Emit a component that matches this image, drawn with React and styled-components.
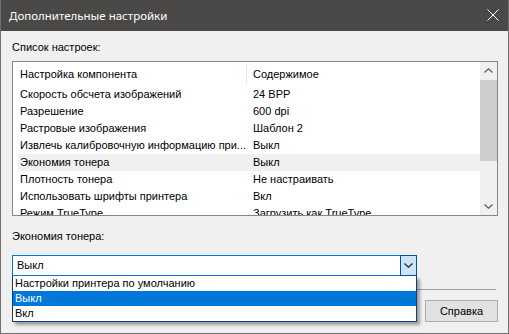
import styled, { createGlobalStyle } from 'styled-components';

const GlobalStyle = createGlobalStyle`
    html, body {
        margin: 0;
        padding: 0;
        background: #ffffff;
    }
    body {
        font-family: "Liberation Sans", Arial, sans-serif;
        font-size: 11px;
        color: #000000;
    }
`;

const rows = [
    ['Скорость обсчета изображений', '24 BPP'],
    ['Разрешение', '600 dpi'],
    ['Растровые изображения', 'Шаблон 2'],
    ['Извлечь калибровочную информацию при...', 'Выкл'],
    ['Экономия тонера', 'Выкл', true],
    ['Плотность тонера', 'Не настраивать'],
    ['Использовать шрифты принтера', 'Вкл'],
    ['Режим TrueType', 'Загрузить как TrueType'],
];

const options = ['Настройки принтера по умолчанию', 'Выкл', 'Вкл'];

function Chevron({ up, color = '#606060', w = 9, h = 5 }) {
    return (
        <svg width={w} height={h} viewBox="0 0 9 5">
            <path
                d={up ? 'M0.5 4.5 L4.5 0.8 L8.5 4.5' : 'M0.5 0.5 L4.5 4.2 L8.5 0.5'}
                fill="none"
                stroke={color}
                strokeWidth="1.3"
            />
        </svg>
    );
}

function App() {
    return (
        <>
            <GlobalStyle />
            <Window>
                <TitleBar>
                    <Title>Дополнительные настройки</Title>
                    <Close>
                        <svg width="12" height="12" viewBox="0 0 12 12">
                            <path d="M0.5 0.5 L11.5 11.5 M11.5 0.5 L0.5 11.5" stroke="#ffffff" strokeWidth="1" />
                        </svg>
                    </Close>
                </TitleBar>
                <Body>
                    <Label $top={8}>Список настроек:</Label>
                    <ListBox>
                        <ListContent>
                            <HeaderRow>
                                <HeaderCell $w={233}>Настройка компонента</HeaderCell>
                                <HeaderCell $sep>Содержимое</HeaderCell>
                            </HeaderRow>
                            {rows.map(([name, value, selected]) => (
                                <Row key={name} $selected={selected}>
                                    <NameCell>{name}</NameCell>
                                    <ValueCell>{value}</ValueCell>
                                </Row>
                            ))}
                        </ListContent>
                        <ScrollBar>
                            <ArrowBox><Chevron up /></ArrowBox>
                            <Thumb />
                            <Track />
                            <ArrowBox><Chevron /></ArrowBox>
                        </ScrollBar>
                    </ListBox>
                    <Label $top={12}>Экономия тонера:</Label>
                    <ComboWrap>
                        <Combo>
                            <ComboText>Выкл</ComboText>
                            <ComboButton>
                                <Chevron color="#2b2b2b" />
                            </ComboButton>
                        </Combo>
                        <DropList>
                            {options.map((o) => (
                                <Option key={o} $selected={o === 'Выкл'}>{o}</Option>
                            ))}
                        </DropList>
                    </ComboWrap>
                    <Separator />
                    <ButtonRow>
                        <Button>Справка</Button>
                    </ButtonRow>
                </Body>
            </Window>
        </>
    );
}

const Window = styled.div`
    width: 509px;
    height: 334px;
    box-sizing: border-box;
    border: 1px solid #6f6f6f;
    border-top: none;
    background: #f0f0f0;
    display: flex;
    flex-direction: column;
    overflow: hidden;
`;

const TitleBar = styled.div`
    height: 31px;
    margin: 0 -1px;
    background: #4a4947;
    display: flex;
    align-items: center;
    justify-content: space-between;
    padding: 0 10px 0 9px;
`;

const Title = styled.div`
    color: #ffffff;
    font-family: "Noto Sans", "Open Sans", sans-serif;
    font-size: 11.5px;
`;

const Close = styled.div`
    display: flex;
    align-items: center;
    padding-bottom: 1px;
`;

const Body = styled.div`
    padding: 0 10px 0 11px;
    display: flex;
    flex-direction: column;
`;

const Label = styled.div`
    margin-top: ${(p) => p.$top}px;
    height: 16px;
    line-height: 16px;
`;

const ListBox = styled.div`
    margin-top: 6px;
    width: 486px;
    height: 155px;
    box-sizing: border-box;
    border: 1px solid #828790;
    background: #ffffff;
    display: flex;
    overflow: hidden;
`;

const ListContent = styled.div`
    flex: 1;
    overflow: hidden;
`;

const HeaderRow = styled.div`
    height: 24px;
    display: flex;
    align-items: center;
`;

const HeaderCell = styled.div`
    box-sizing: border-box;
    width: ${(p) => (p.$w ? `${p.$w}px` : 'auto')};
    flex: ${(p) => (p.$w ? 'none' : '1')};
    padding-left: ${(p) => (p.$sep ? 6 : 7)}px;
    height: 20px;
    line-height: 20px;
    border-left: ${(p) => (p.$sep ? '1px solid #e5e5e5' : 'none')};
`;

const Row = styled.div`
    height: 17px;
    line-height: 17px;
    margin-left: 5px;
    display: flex;
    background: ${(p) => (p.$selected ? '#f0f0f0' : 'transparent')};
    white-space: nowrap;
`;

const NameCell = styled.div`
    width: 234px;
    padding-left: 2px;
    box-sizing: border-box;
    overflow: hidden;
    text-overflow: ellipsis;
`;

const ValueCell = styled.div`
    padding-left: 1px;
`;

const ScrollBar = styled.div`
    width: 17px;
    background: #f0f0f0;
    display: flex;
    flex-direction: column;
`;

const ArrowBox = styled.div`
    height: 17px;
    display: flex;
    align-items: center;
    justify-content: center;
`;

const Thumb = styled.div`
    height: 81px;
    margin: 1px 0 0;
    background: #cdcdcd;
`;

const Track = styled.div`
    flex: 1;
`;

const ComboWrap = styled.div`
    position: relative;
    margin-top: 11px;
`;

const Combo = styled.div`
    width: 405px;
    height: 21px;
    box-sizing: border-box;
    border: 1px solid #0078d7;
    background: #ffffff;
    display: flex;
`;

const ComboText = styled.div`
    flex: 1;
    padding-left: 4px;
    line-height: 19px;
`;

const ComboButton = styled.div`
    width: 15px;
    margin: -1px -1px -1px 0;
    border: 1px solid #005499;
    background: #cce4f7;
    display: flex;
    align-items: center;
    justify-content: center;
`;

const DropList = styled.div`
    position: absolute;
    left: 0;
    top: 21px;
    width: 405px;
    box-sizing: border-box;
    border: 1px solid #0f3c7a;
    border-top: none;
    background: #ffffff;
    box-shadow: 3px 3px 3px rgba(0, 0, 0, 0.35);
    z-index: 2;
`;

const Option = styled.div`
    height: 15px;
    line-height: 15px;
    padding-left: 2px;
    background: ${(p) => (p.$selected ? '#0078d7' : 'transparent')};
    color: ${(p) => (p.$selected ? '#ffffff' : '#000000')};
`;

const Separator = styled.div`
    margin-top: 13px;
    width: 484px;
    height: 1px;
    background: #a0a0a0;
`;

const ButtonRow = styled.div`
    margin-top: 10px;
    width: 486px;
    display: flex;
    justify-content: flex-end;
`;

const Button = styled.div`
    width: 73px;
    height: 22px;
    box-sizing: border-box;
    border: 1px solid #adadad;
    background: #e1e1e1;
    display: flex;
    align-items: center;
    justify-content: center;
`;

export default App;
